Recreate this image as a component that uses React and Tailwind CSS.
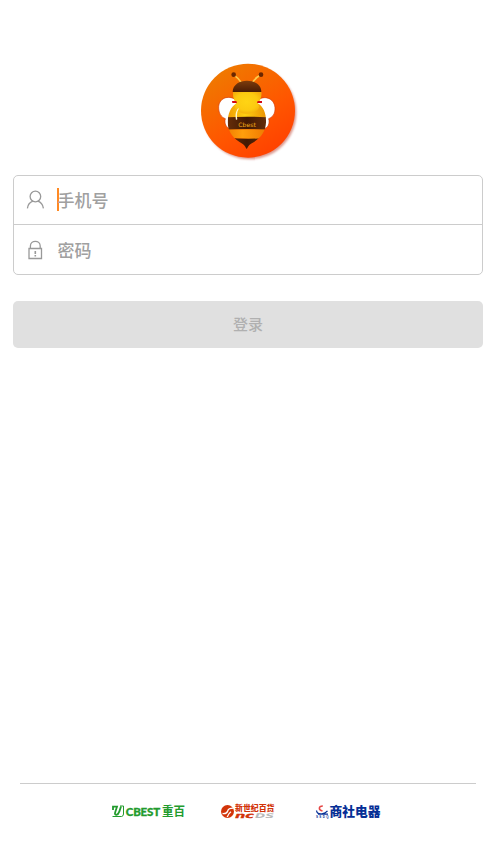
function BeeLogo() {
  return (
    <svg className="block h-[106px] w-[108px]" viewBox="0 0 324 318" role="img" aria-label="Cbest">
      <defs>
        <linearGradient id="disc" x1="0.2" y1="0.1" x2="0.75" y2="0.95">
          <stop offset="0" stopColor="#f07800" />
          <stop offset="0.6" stopColor="#ff5600" />
          <stop offset="1" stopColor="#ff4200" />
        </linearGradient>
        <linearGradient id="cap" x1="0" y1="0" x2="0" y2="1">
          <stop offset="0" stopColor="#7d3c0c" />
          <stop offset="1" stopColor="#4a1c04" />
        </linearGradient>
        <linearGradient id="band" x1="0" y1="0" x2="1" y2="0">
          <stop offset="0" stopColor="#6b300a" />
          <stop offset="0.5" stopColor="#421903" />
          <stop offset="1" stopColor="#69300b" />
        </linearGradient>
        <radialGradient id="face" cx="0.48" cy="0.45" r="0.6">
          <stop offset="0" stopColor="#ffd414" />
          <stop offset="0.65" stopColor="#fcca10" />
          <stop offset="1" stopColor="#f4ac0a" />
        </radialGradient>
        <linearGradient id="belly" x1="0" y1="0" x2="1" y2="0">
          <stop offset="0" stopColor="#ef9400" />
          <stop offset="0.45" stopColor="#ffd012" />
          <stop offset="1" stopColor="#e98a00" />
        </linearGradient>
        <linearGradient id="stripe" x1="0" y1="0" x2="1" y2="0">
          <stop offset="0" stopColor="#ee7a00" />
          <stop offset="0.4" stopColor="#ff9e0c" />
          <stop offset="1" stopColor="#ed7500" />
        </linearGradient>
        <filter id="soft" x="-10%" y="-10%" width="120%" height="120%">
          <feGaussianBlur stdDeviation="3" />
        </filter>
        <clipPath id="body">
          <path d="M125 136C107 146 98 168 98 193C99 224 116 243 142 257C150 262 152 269 155 273C158 269 160 262 168 257C196 243 212 222 213 193C214 168 206 146 188 136Z" />
        </clipPath>
      </defs>
      <circle cx="164" cy="164" r="140" fill="#b83422" opacity="0.5" filter="url(#soft)" />
      <circle cx="159" cy="158" r="141" fill="url(#disc)" />
      <g fill="#fff" stroke="#d33b08" strokeWidth="2">
        <path d="M125 128C106 110 73 117 71 146C70 165 79 178 91 182C87 196 94 211 106 211L130 170Z" />
        <path d="M187 128C206 110 238 120 240 149C241 168 232 178 221 182C225 196 219 211 207 211L180 170Z" />
      </g>
      <path d="M139 74Q130 60 118 52M172 74Q181 60 195 52" fill="none" stroke="#ffc94a" strokeWidth="5" />
      <circle cx="116" cy="50" r="7" fill="#6a2600" />
      <circle cx="198" cy="50" r="7" fill="#6a2600" />
      <g clipPath="url(#body)">
        <path d="M90 130H222V180H90Z" fill="url(#belly)" />
        <path d="M90 178Q155 174 222 178V216Q155 212 90 216Z" fill="url(#band)" />
        <path d="M90 215Q155 212 222 215V241Q155 246 90 239Z" fill="url(#stripe)" />
        <path d="M90 238Q155 246 222 239V280H90Z" fill="url(#band)" />
      </g>
      <path d="M114 101C113 118 117 128 123 136L118 146C132 174 180 175 193 147L189 136C197 126 201 113 199 101Z" fill="url(#face)" />
      <path d="M113 102C113 57 199 57 199 102Z" fill="url(#cap)" />
      <path d="M111 129H124L126 135H112ZM188 129H201V135H186Z" fill="#d40914" />
      <path d="M130 150C120 162 121 174 123 186L127 184C125 174 125 163 131 153Z" fill="#fff8cf" />
      <text x="156" y="207" textAnchor="middle" textLength="53" lengthAdjust="spacingAndGlyphs" fill="#f5ae18" className="font-['DejaVu_Sans',sans-serif] text-[18px]">Cbest</text>
    </svg>
  );
}

function UserIcon() {
  return (
    <svg className="h-5 w-[18px]" viewBox="0 0 18 20" fill="none" stroke="#999" strokeWidth="1.3">
      <circle cx="9.4" cy="6.5" r="5.3" />
      <path d="M1.4 18.3C1.9 14.5 4.1 12.2 6.9 11.2M11.9 11.2C14.7 12.2 16.8 14.5 17.4 18.3" />
    </svg>
  );
}

function LockIcon() {
  return (
    <svg className="h-5 w-[18px]" viewBox="0 0 18 20" fill="none" stroke="#999" strokeWidth="1.3">
      <path d="M3 8.5H15.5V18.5H3ZM4.4 8.5V6C4.4-.2 14.2-.2 14.2 6V8.5" />
      <path d="M9.3 11V14M9.3 15V16.5" strokeWidth="1.6" />
    </svg>
  );
}

function CbestBrand() {
  return (
    <svg className="h-[26px] w-[90px]" viewBox="0 0 90 26" fill="#229b2d" role="img" aria-label="CBEST 重百">
      <g fill="none" stroke="#229b2d">
        <path d="M8 12V8.7H12L10.2 14.2Q9.4 17 11.3 16.8Q13.4 16.4 14.4 13.4L16 8.5" strokeWidth="1.8" />
        <path d="M7.5 18.5H16.5Q18.5 18.2 18.5 16V8H15" strokeWidth="1" />
      </g>
      <text x="20.7" y="18" textLength="34.5" lengthAdjust="spacing" stroke="#229b2d" strokeWidth="0.3" className="font-['Lato',sans-serif] text-[11.5px] font-black">CBEST</text>
      <text x="57" y="18" textLength="23" lengthAdjust="spacingAndGlyphs" className="font-['Noto_Sans_CJK_SC',sans-serif] text-[12px] font-bold">重百</text>
    </svg>
  );
}

function NcdsBrand() {
  return (
    <svg className="h-[26px] w-[65px]" viewBox="0 0 65 26" fill="#d23409" role="img" aria-label="新世纪百货 NCDS">
      <circle cx="12.5" cy="13.5" r="6.5" />
      <path d="M7.5 15.5Q12 16 12.7 13Q13.4 10.2 18.2 10.2M12.2 19Q13.5 15.2 16 13.7" fill="none" stroke="#fff" strokeWidth="1.3" />
      <text x="20" y="12.6" textLength="39.5" lengthAdjust="spacingAndGlyphs" className="font-['Noto_Sans_CJK_SC',sans-serif] text-[7.5px] font-black">新世纪百货</text>
      <g className="font-['DejaVu_Sans',sans-serif] font-bold italic">
        <text x="20" y="20" textLength="19" lengthAdjust="spacingAndGlyphs" stroke="#d23409" strokeWidth="0.3" className="text-[7.5px]">nc</text>
        <text x="40" y="20" textLength="19" lengthAdjust="spacingAndGlyphs" fill="#b9b9b9" className="text-[6.5px]">DS</text>
      </g>
    </svg>
  );
}

function ApplianceBrand() {
  return (
    <svg className="h-[26px] w-20" viewBox="0 0 80 26" fill="#062f96" role="img" aria-label="商社电器">
      <path d="M12.8 8Q9.3 8 9.4 10.5Q9.5 12.4 12.5 13" fill="none" stroke="#e54847" strokeWidth="1.6" />
      <path d="M6.5 12.5Q7 16.5 12 15.8Q15.7 15 17.5 12.8M8 16.2H18" fill="none" stroke="#062f96" strokeWidth="1.3" />
      <text x="6" y="20" textLength="12.5" className="font-['Liberation_Sans',sans-serif] text-[3px] font-bold">SSDQ</text>
      <text x="19.5" y="18.4" textLength="51" lengthAdjust="spacingAndGlyphs" className="font-['Noto_Sans_CJK_SC',sans-serif] text-[13px] font-black">商社电器</text>
    </svg>
  );
}

export default function App() {
  return (
    <div className="flex h-[859px] w-[496px] flex-col bg-white pt-[58px] font-['Noto_Sans_CJK_SC',sans-serif]">
      <div className="ml-[195px]"><BeeLogo /></div>
      <form className="mx-[13px] mt-[11px]">
        <div className="h-[100px] rounded-[5px] border border-[#ccc]">
          <div className="flex h-[49px] items-center border-b border-[#ccc] pb-px pl-[12px]">
            <UserIcon />
            <div className="ml-[13px] h-[23px] w-[2px] bg-[#ff8a24]" />
            <span className="-ml-[1.5px] text-[17px] leading-6 font-medium text-[#a0a0a0]">手机号</span>
          </div>
          <div className="flex h-[49px] items-center pl-[12px]">
            <LockIcon />
            <span className="ml-[13.5px] text-[17px] leading-6 font-medium text-[#a0a0a0]">密码</span>
          </div>
        </div>
        <button type="button" className="mt-[26px] flex h-[47px] w-full items-center justify-center rounded-[5px] bg-[#e0e0e0] text-[15px] font-medium text-[#b0b0b0]">登录</button>
      </form>
      <footer className="mx-5 mt-auto h-[76px] border-t border-[#ccc] pt-[14px]">
        <div className="ml-[85px] flex">
          <CbestBrand />
          <div className="ml-5"><NcdsBrand /></div>
          <div className="ml-[30px]"><ApplianceBrand /></div>
        </div>
      </footer>
    </div>
  );
}
